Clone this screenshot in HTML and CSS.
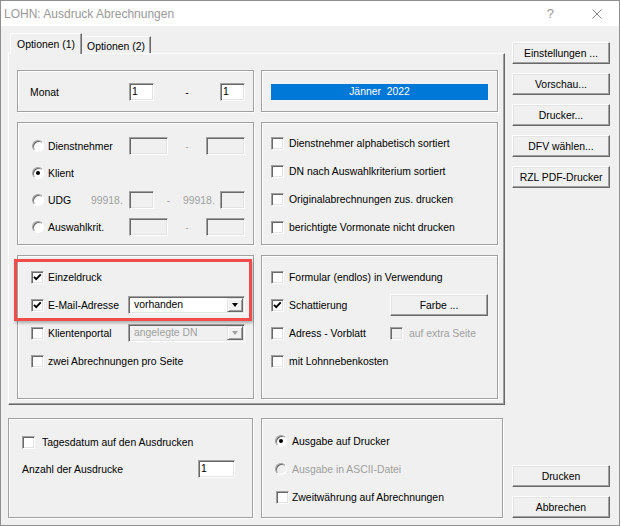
FILE: index.html
```html
<!DOCTYPE html>
<html lang="de">
<head>
    <meta charset="UTF-8">
    <title>LOHN: Ausdruck Abrechnungen</title>
    <link rel="stylesheet" href="styles.css">
</head>
<body>
<div class="window">
    <!-- Title bar -->
    <div class="titlebar">
        <span class="title">LOHN: Ausdruck Abrechnungen</span>
        <span class="help">?</span>
        <svg class="close" width="10" height="10" viewBox="0 0 10 10">
            <path d="M0.5 0.5 L9.5 9.5 M9.5 0.5 L0.5 9.5" stroke="#8a8a8a" stroke-width="1" fill="none"/>
        </svg>
    </div>

    <div class="client">
        <div class="main">
            <div class="tabs">
                <div class="tab active">Optionen (1)</div>
                <div class="tab">Optionen (2)</div>
            </div>

            <div class="panel">
                <!-- Monat -->
                <div class="group g-month">
                    <span class="lbl-month">Monat</span>
                    <span class="edit w25">1</span>
                    <span class="dash">-</span>
                    <span class="edit w25">1</span>
                </div>

                <div class="group g-period">
                    <div class="month-bar">Jänner  2022</div>
                </div>

                <!-- Auswahl -->
                <div class="group rows g-who">
                    <div class="row">
                        <span class="opt w97"><span class="rb"></span>Dienstnehmer</span>
                        <span class="edit off w39"></span>
                        <span class="dash dim">-</span>
                        <span class="edit off w39"></span>
                    </div>
                    <div class="row">
                        <span class="opt"><span class="rb on"></span>Klient</span>
                    </div>
                    <div class="row">
                        <span class="opt w59"><span class="rb"></span>UDG</span>
                        <span class="prefix dim w38">99918.</span>
                        <span class="edit off w25"></span>
                        <span class="dash dim">-</span>
                        <span class="prefix dim w37">99918.</span>
                        <span class="edit off w25"></span>
                    </div>
                    <div class="row">
                        <span class="opt w97"><span class="rb"></span>Auswahlkrit.</span>
                        <span class="edit off w39"></span>
                        <span class="dash dim">-</span>
                        <span class="edit off w39"></span>
                    </div>
                </div>

                <!-- Sortierung -->
                <div class="group rows g-sort">
                    <div class="row"><span class="opt"><span class="cb"></span>Dienstnehmer alphabetisch sortiert</span></div>
                    <div class="row"><span class="opt"><span class="cb"></span>DN nach Auswahlkriterium sortiert</span></div>
                    <div class="row"><span class="opt"><span class="cb"></span>Originalabrechnungen zus. drucken</span></div>
                    <div class="row"><span class="opt"><span class="cb"></span>berichtigte Vormonate nicht drucken</span></div>
                </div>

                <!-- Versand -->
                <div class="group rows g-send">
                    <div class="mark"></div>
                    <div class="row">
                        <span class="opt"><span class="cb on"><svg width="11" height="11" viewBox="0 0 11 11"><path d="M2 4.8 L4.2 7.2 L8.8 2.4" stroke="#000" stroke-width="1.9" fill="none"/></svg></span>Einzeldruck</span>
                    </div>
                    <div class="row">
                        <span class="opt w97"><span class="cb on"><svg width="11" height="11" viewBox="0 0 11 11"><path d="M2 4.8 L4.2 7.2 L8.8 2.4" stroke="#000" stroke-width="1.9" fill="none"/></svg></span>E-Mail-Adresse</span>
                        <span class="combo">
                            <span class="combo-val">vorhanden</span>
                            <span class="combo-btn"><span class="tri"></span></span>
                        </span>
                    </div>
                    <div class="row">
                        <span class="opt w97"><span class="cb"></span>Klientenportal</span>
                        <span class="combo off">
                            <span class="combo-val">angelegte DN</span>
                            <span class="combo-btn"><span class="tri"></span></span>
                        </span>
                    </div>
                    <div class="row">
                        <span class="opt"><span class="cb"></span>zwei Abrechnungen pro Seite</span>
                    </div>
                </div>

                <!-- Layout -->
                <div class="group rows g-extra">
                    <div class="row"><span class="opt"><span class="cb"></span>Formular (endlos) in Verwendung</span></div>
                    <div class="row">
                        <span class="opt w119"><span class="cb on"><svg width="11" height="11" viewBox="0 0 11 11"><path d="M2 4.8 L4.2 7.2 L8.8 2.4" stroke="#000" stroke-width="1.9" fill="none"/></svg></span>Schattierung</span>
                        <span class="btn">Farbe ...</span>
                    </div>
                    <div class="row">
                        <span class="opt w119"><span class="cb"></span>Adress - Vorblatt</span>
                        <span class="opt sub dim"><span class="cb off"></span>auf extra Seite</span>
                    </div>
                    <div class="row"><span class="opt"><span class="cb"></span>mit Lohnnebenkosten</span></div>
                </div>
            </div>

            <div class="bottom">
                <div class="group rows g-date">
                    <div class="row"><span class="opt"><span class="cb"></span>Tagesdatum auf den Ausdrucken</span></div>
                    <div class="row">
                        <span class="opt w176">Anzahl der Ausdrucke</span>
                        <span class="edit w37">1</span>
                    </div>
                </div>
                <div class="group rows g-output">
                    <div class="row"><span class="opt"><span class="rb on"></span>Ausgabe auf Drucker</span></div>
                    <div class="row"><span class="opt dim"><span class="rb off"></span>Ausgabe in ASCII-Datei</span></div>
                    <div class="row"><span class="opt cbrow"><span class="cb"></span>Zweitwährung auf Abrechnungen</span></div>
                </div>
            </div>
        </div>

        <div class="side">
            <div class="stack">
                <span class="btn">Einstellungen ...</span>
                <span class="btn">Vorschau...</span>
                <span class="btn">Drucker...</span>
                <span class="btn">DFV wählen...</span>
                <span class="btn">RZL PDF-Drucker</span>
            </div>
            <div class="stack end">
                <span class="btn">Drucken</span>
                <span class="btn">Abbrechen</span>
            </div>
        </div>
    </div>
</div>
</body>
</html>
```

FILE: styles.css
```css
body {
    margin: 0;
    font-family: "Liberation Sans", Arial, sans-serif;
    font-size: 10.4px;
    color: #000;
    background: #fff;
    white-space: nowrap;
}

.window {
    width: 620px;
    height: 526px;
    box-sizing: border-box;
    border: 1px solid #8f8f8f;
    background: #f0f0f0;
    display: flex;
    flex-direction: column;
}

/* Title bar */
.titlebar {
    height: 25px;
    flex: none;
    background: #fff;
    display: flex;
    align-items: center;
    padding-left: 3px;
    font-size: 12px;
    color: #999;
}

.title {
    flex: 1;
}

.help {
    margin-right: 38px;
    font-size: 13px;
}

.close {
    margin-right: 17px;
}

.client {
    flex: 1;
    display: flex;
    padding: 7px 0 7px 7px;
}

.main {
    width: 497px;
    display: flex;
    flex-direction: column;
}

/* Tabs */
.tabs {
    height: 20px;
    display: flex;
    align-items: flex-end;
    padding-left: 2px;
}

.tab {
    box-sizing: border-box;
    height: 17px;
    width: 69px;
    border-top: 1px solid #fff;
    border-right: 1px solid #696969;
    box-shadow: inset -1px 0 #a0a0a0;
    display: flex;
    align-items: center;
    justify-content: center;
    padding-top: 2px;
}

.tab.active {
    height: 21px;
    width: 72px;
    margin-bottom: -1px;
    border-left: 1px solid #fff;
    background: #f0f0f0;
    position: relative;
    z-index: 1;
    padding-top: 0;
}

.panel {
    box-sizing: border-box;
    height: 352px;
    border: 1px solid;
    border-color: #fff #696969 #696969 #fff;
    box-shadow: inset -1px -1px #a0a0a0;
    display: grid;
    grid-template-columns: 237px 237px;
    grid-template-rows: 42px 123px 144px;
    column-gap: 7px;
    row-gap: 10px;
    padding: 16px 6px 0 8px;
}

/* Group boxes */
.group {
    box-sizing: border-box;
    border: 1px solid #a0a0a0;
    box-shadow: inset 1px 1px #fff, 1px 1px #fff;
}

.rows {
    display: flex;
    flex-direction: column;
}

.row {
    height: 18px;
    display: flex;
    align-items: center;
}

.opt {
    display: flex;
    align-items: center;
    flex: none;
}

.w97 { width: 97px; }
.w59 { width: 59px; }
.w119 { width: 119px; }
.w176 { width: 176px; }

.g-month {
    display: flex;
    align-items: center;
    padding: 2px 8px 0 12px;
}

.lbl-month {
    width: 99px;
}

.dash {
    flex: 1;
    text-align: center;
}

.dim {
    color: #a0a0a0;
}

.g-period {
    padding: 13px 9px 0 9px;
}

.month-bar {
    height: 16px;
    line-height: 16px;
    background: #0078d7;
    color: #fff;
    text-align: center;
    white-space: pre;
}

.g-who {
    padding: 14px 8px 0 14px;
    gap: 9px;
}

.g-who .opt { gap: 4px; }

.prefix {
    flex: none;
}

.w38 { width: 38px; }
.w37 { width: 37px; }

.g-sort {
    padding: 11px 8px 0 9px;
    gap: 10px;
}

.g-sort .opt,
.g-extra .opt { gap: 5px; }

.g-extra .sub { gap: 6px; }

.g-send {
    position: relative;
    padding: 12px 8px 0 13px;
    gap: 10px;
}

.g-send .opt { gap: 4px; }

.g-extra {
    padding: 12px 8px 0 9px;
    gap: 10px;
}

/* red frame around the mail options */
.mark {
    position: absolute;
    left: -4px;
    top: 3px;
    width: 238px;
    height: 62px;
    box-sizing: border-box;
    border: 3px solid #f24b4b;
    box-shadow: 1px 2px 3px rgba(0, 0, 0, 0.28);
    pointer-events: none;
}

/* bottom groups */
.bottom {
    display: flex;
    gap: 8px;
    margin-top: 13px;
    height: 100px;
}

.g-date {
    width: 245px;
    padding: 14px 8px 0 13px;
    gap: 9px;
}

.g-date .opt { gap: 7px; }

.g-output {
    width: 242px;
    padding: 13px 8px 0 13px;
    gap: 10px;
}

.g-output .opt { gap: 5px; }

.g-output .cbrow { gap: 3px; padding-left: 1px; }

/* controls */
.cb {
    box-sizing: border-box;
    width: 13px;
    height: 13px;
    flex: none;
    border: 1px solid;
    border-color: #a0a0a0 #fff #fff #a0a0a0;
    box-shadow: inset 1px 1px #696969, inset -1px -1px #e3e3e3;
    background: #fff;
    display: flex;
}

.rb {
    box-sizing: border-box;
    width: 12px;
    height: 12px;
    flex: none;
    border-radius: 50%;
    border: 1px solid;
    border-color: #a0a0a0 #fff #fff #a0a0a0;
    box-shadow: inset 1px 1px #696969;
    background: #fff;
    position: relative;
}

.rb.on::after {
    content: "";
    position: absolute;
    left: 3px;
    top: 3px;
    width: 4px;
    height: 4px;
    border-radius: 50%;
    background: #000;
}

.cb.off,
.rb.off {
    background: #f0f0f0;
}

.edit {
    box-sizing: border-box;
    height: 18px;
    flex: none;
    border: 1px solid;
    border-color: #a0a0a0 #fff #fff #a0a0a0;
    box-shadow: inset 1px 1px #696969, inset -1px -1px #e3e3e3;
    background: #fff;
    padding-left: 2px;
    line-height: 16px;
}

.edit.off {
    background: #f0f0f0;
}

.w25 { width: 25px; }
.w39 { width: 39px; }
.edit.w37 { width: 37px; }

.combo {
    box-sizing: border-box;
    width: 117px;
    height: 18px;
    flex: none;
    display: flex;
    border: 1px solid;
    border-color: #a0a0a0 #fff #fff #a0a0a0;
    box-shadow: inset 1px 1px #696969, inset -1px -1px #e3e3e3;
    background: #fff;
    padding: 1px;
}

.combo-val {
    flex: 1;
    padding-left: 4px;
    line-height: 14px;
}

.combo-btn {
    box-sizing: border-box;
    width: 16px;
    border: 1px solid;
    border-color: #e3e3e3 #696969 #696969 #e3e3e3;
    box-shadow: inset 1px 1px #fff, inset -1px -1px #a0a0a0;
    background: #f0f0f0;
    display: flex;
    align-items: center;
    justify-content: center;
}

.tri {
    width: 0;
    height: 0;
    border-left: 3.5px solid transparent;
    border-right: 3.5px solid transparent;
    border-top: 4px solid #000;
}

.combo.off {
    background: #f0f0f0;
    color: #a0a0a0;
}

.combo.off .tri {
    border-top-color: #a0a0a0;
}

.btn {
    box-sizing: border-box;
    width: 98px;
    height: 22px;
    flex: none;
    border: 1px solid;
    border-color: #fff #696969 #696969 #fff;
    box-shadow: inset -1px -1px #a0a0a0, inset 1px 1px #e3e3e3;
    background: #f0f0f0;
    display: flex;
    align-items: center;
    justify-content: center;
}

/* right button column */
.side {
    width: 98px;
    margin-left: 7px;
    padding-top: 9px;
    display: flex;
    flex-direction: column;
}

.stack {
    display: flex;
    flex-direction: column;
    gap: 9px;
}

.stack.end {
    margin-top: auto;
}
```
